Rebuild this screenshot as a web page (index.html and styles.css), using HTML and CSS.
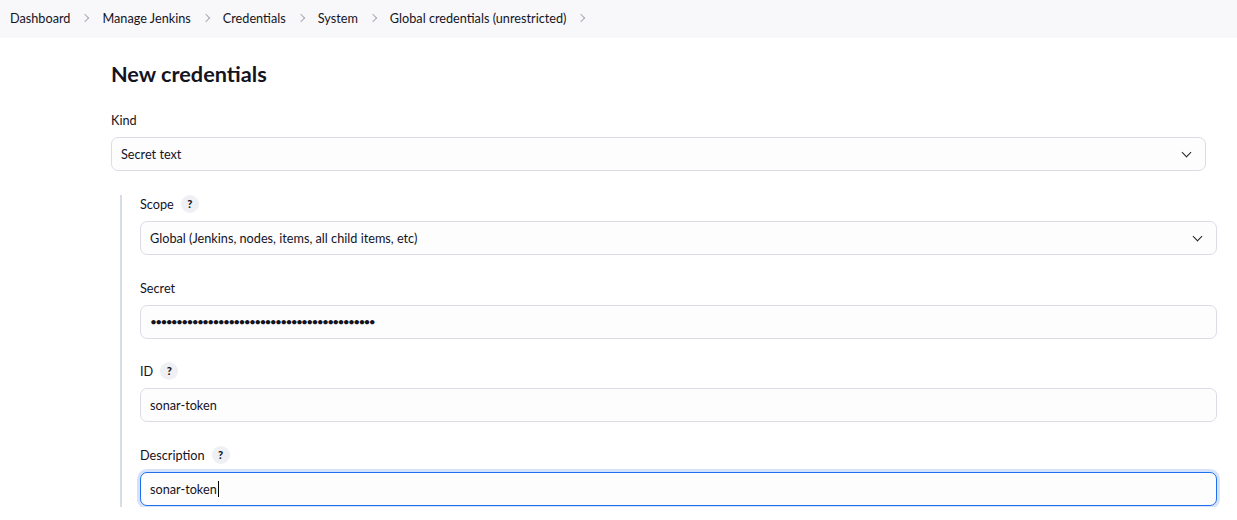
FILE: index.html
```html
<!DOCTYPE html>
<html>
<head>
<meta charset="utf-8">
<link rel="stylesheet" href="styles.css">
</head>
<body>
<nav class="breadcrumbs">
  <a class="crumb">Dashboard</a><span class="sep"></span>
  <a class="crumb">Manage Jenkins</a><span class="sep"></span>
  <a class="crumb">Credentials</a><span class="sep"></span>
  <a class="crumb">System</a><span class="sep"></span>
  <a class="crumb">Global credentials (unrestricted)</a><span class="sep"></span>
</nav>
<main class="page">
  <h1 class="title">New credentials</h1>
  <div class="field">
    <div class="label">Kind</div>
    <div class="control select">Secret text<span class="chev"></span></div>
  </div>
  <div class="nested">
    <div class="field">
      <div class="label">Scope <span class="help">?</span></div>
      <div class="control select">Global (Jenkins, nodes, items, all child items, etc)<span class="chev"></span></div>
    </div>
    <div class="field">
      <div class="label">Secret</div>
      <div class="control secret">•••••••••••••••••••••••••••••••••••••••••••</div>
    </div>
    <div class="field">
      <div class="label">ID <span class="help">?</span></div>
      <div class="control">sonar-token</div>
    </div>
    <div class="field">
      <div class="label">Description <span class="help">?</span></div>
      <div class="control focused">sonar-token<span class="caret"></span></div>
    </div>
  </div>
</main>
</body>
</html>
```
FILE: styles.css
```css
* { box-sizing: border-box; }
body {
  margin: 0;
  font-family: Lato, "Noto Sans", sans-serif;
  font-size: 12.7px;
  color: #14141f;
  background: #fff;
}
.breadcrumbs {
  height: 38px;
  background: #f8f8fa;
  display: flex;
  align-items: center;
  padding: 0 0 3px 10px;
}
.crumb { color: #14141f; }
.sep {
  width: 6px; height: 6px;
  border-top: 1.3px solid #a9abb3;
  border-right: 1.3px solid #a9abb3;
  transform: rotate(45deg);
  margin: 0 14px 0 12px;
}
.page {
  padding: 0 31px 0 111px;
}
.title {
  font-size: 21.7px;
  font-weight: 700;
  margin: 0;
  padding-top: 23px;
  height: 73px;
  line-height: 26px;
}
.field { display: flex; flex-direction: column; gap: 8px; }
.field + .field { margin-top: 23.5px; }
.label {
  height: 18px;
  line-height: 18px;
  display: flex;
  align-items: center;
  gap: 7px;
}
.help {
  width: 18px; height: 18px;
  border-radius: 50%;
  background: #eef0f4;
  font-size: 11px;
  font-weight: 900;
  display: inline-flex;
  align-items: center;
  justify-content: center;
}
.control {
  height: 34px;
  border: 1px solid #dadde6;
  border-radius: 7px;
  background: #fdfdfe;
  display: flex;
  align-items: center;
  padding: 0 9px;
}
.select { justify-content: space-between; }
.chev {
  width: 7px; height: 7px;
  border-right: 1.8px solid #222;
  border-bottom: 1.8px solid #222;
  transform: rotate(45deg);
  margin: -4px 6px 0 0;
}
.secret { letter-spacing: -1.75px; font-size: 12px; }
.nested {
  margin: 24px -11px 0 9px;
  border-left: 2px solid #d8dce6;
  padding: 0 0 1px 18px;
}
.focused {
  border: 1.5px solid #1f6fef;
  box-shadow: 0 0 0 3px #d4e3fb;
}
.caret {
  width: 1px; height: 16px;
  background: #000;
  margin-left: 1px;
}
```
